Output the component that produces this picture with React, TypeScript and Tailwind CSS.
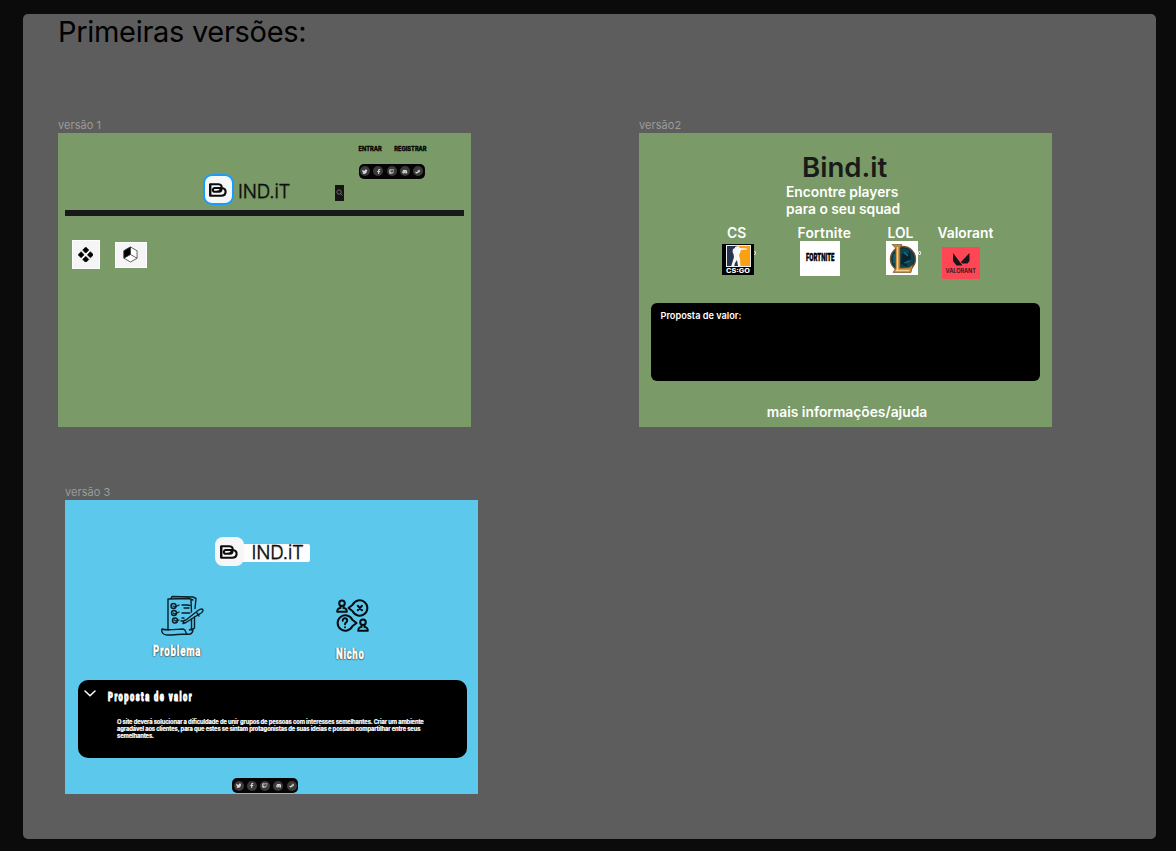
import React from "react";
import { FaDiscord, FaFacebookF, FaSteamSymbol, FaTwitch, FaTwitter } from "react-icons/fa";

function SocialPill() {
  const icons = [FaTwitter, FaFacebookF, FaTwitch, FaDiscord, FaSteamSymbol];
  return (
    <div className="flex h-[15.5px] w-[66px] items-center justify-between rounded-[5px] bg-[#050505] px-[1.5px]">
      {icons.map((Icon, i) => (
        <span key={i} className="flex size-[10px] items-center justify-center rounded-full bg-[#3b3b3b]">
          <Icon className="size-[5.5px] text-[#d8d8d8]" />
        </span>
      ))}
    </div>
  );
}

function Mark({ className }: { className: string }) {
  return (
    <svg viewBox="0 0 18 14" className={className} fill="none" stroke="#0b0b0b" strokeWidth="2.1" strokeLinejoin="round">
      <path d="M1.200 1.200H9.300C12.500 1.200 13.200 3.500 12.200 5.600C11.200 8.200 9.500 8.800 7.500 8.800H5.800C3.200 8.800 3.200 5 5.800 5H12.800C18 5 18 12.800 12 12.800H1.200ZM12.200 5.600C13 7.500 11.800 8.800 10 8.800H7.500" />
      <path d="M1.200 1.200V12.800" />
    </svg>
  );
}

function VersionOne() {
  return (
    <div className="h-[293.5px] w-[413px] bg-[#7a9b67]">
      <div className="flex h-[77px]">
        <div className="ml-[145px] mt-[41px] flex h-[31px] w-[132px] items-center">
          <div className="flex size-[31px] shrink-0 items-center justify-center rounded-[9px] border-2 border-[#1a9bff] bg-[#f7f7f7]">
            <Mark className="-ml-[2px] h-[14px] w-[18px]" />
          </div>
          <span className="ml-[4px] mt-[4px] whitespace-nowrap text-[18.7px] font-light leading-[22px] tracking-[-0.15px] text-[#0d0d0d] [-webkit-text-stroke:0.3px_#0d0d0d] [text-shadow:0_1px_1px_#0004]">IND.iT</span>
        </div>
        <div className="mt-[52px] flex h-[15.5px] w-[9px] items-center justify-center bg-[#151515]">
          <svg viewBox="0 0 8 8" className="size-[7px]" fill="none" stroke="#777" strokeWidth="1">
            <circle cx="3.5" cy="3.5" r="2.5" />
            <path d="m5.4 5.4 2 2" />
          </svg>
        </div>
        <div className="ml-[14px] mt-[12px]">
          <div className="flex h-[7px] items-center gap-[12.5px] whitespace-nowrap pl-[0.5px] text-[5.7px] font-bold leading-[7px] text-black [-webkit-text-stroke:0.3px_#000]">
            <span>ENTRAR</span>
            <span>REGISTRAR</span>
          </div>
          <div className="mt-[11.5px] pl-[0.5px]">
            <SocialPill />
          </div>
        </div>
      </div>
      <div className="ml-[7px] h-[6px] w-[398.5px] bg-[#191919]" />
      <div className="ml-[14px] mt-[24px] flex items-center gap-[15px]">
        <div className="flex h-[29px] w-[27.5px] items-center justify-center border border-white bg-[#f5f5f5]">
          <svg viewBox="0 0 16 16" className="-ml-px size-[15.5px]">
            <path d="m8 0 3.200 3.200L8 6.400 4.800 3.200ZM8 9.600l3.200 3.200L8 16l-3.200-3.200ZM3.200 4.800 6.400 8l-3.200 3.200L0 8ZM12.800 4.800 16 8l-3.200 3.200L9.600 8Z" fill="#000" stroke="#000" strokeWidth=".6" />
            <circle cx="8" cy="8" r="1.500" fill="#fff" />
          </svg>
        </div>
        <div className="flex h-[26px] w-[32px] items-center justify-center border border-white bg-[#f5f5f5]">
          <svg viewBox="0 0 16 18" className="-ml-px h-[17px] w-[15px]" stroke="#333" strokeWidth="0.8" strokeLinejoin="round" fill="none">
            <path d="M8 1 15 5v8l-7 4-7-4V5Z" fill="#fff" />
            <path d="M8 1v8l-7 4V5Z" fill="#000" />
            <path d="M8 9 15 13" />
          </svg>
        </div>
      </div>
    </div>
  );
}

function CsLogo() {
  return (
    <svg viewBox="0 0 32 31" className="h-[31px] w-[32px]">
      <path fill="#000" d="M0 0h32v31H0z" />
      <path fill="#e9edf0" d="M4 1h25v22H4z" />
      <path fill="#263451" d="M5 2h11v20H5z" />
      <path fill="#f9a013" d="M16 2h12v20H16z" />
      <path fill="#f7f7f7" d="m13 3 3-1 2 2 7 .5v1l-6 .5-1 3-1 2 1 4 .5 7H16l-1-6-2 3-1 4H9l1.500-5 1.500-5-.5-3-1-2 .5-3 2-1Z" />
      <text x="4" y="29.200" textLength="24" lengthAdjust="spacingAndGlyphs" fontFamily="Inter" fontSize="6" fontWeight="800" fill="#fff">CS:GO</text>
    </svg>
  );
}

function LolLogo() {
  return (
    <svg viewBox="0 0 32 34" className="h-[34px] w-[32px]">
      <path fill="#fff" d="M0 0h32v34H0z" />
      <circle cx="17" cy="18" r="12.500" fill="#0b3442" stroke="#76552c" strokeWidth="1.400" />
      <circle cx="17" cy="18" r="10.600" fill="#0b4351" />
      <path fill="#07232f" d="m16 12 5 3 3-5 1 8-6 3 3 5-7-3Z" />
      <path d="m18 11 4 4M18 22l6-2M8 13v9" stroke="#15707f" strokeWidth="1.200" />
      <path fill="#c18638" stroke="#68431b" strokeWidth=".6" d="M6 3.500h10l-2 3.500v20l9-.5 4-3-2 8H7l2.500-4V7Z" />
      <path d="M11.500 6v22l-1 1.500h13" stroke="#f0d08b" fill="none" strokeWidth="1.400" />
    </svg>
  );
}

function ValorantLogo() {
  return (
    <svg viewBox="0 0 38 32" className="h-[32px] w-[38px]">
      <path fill="#ff4655" d="M0 0h38v32H0z" />
      <path fill="#19151a" d="m11 6 9.500 12.500h-6L11 14ZM27.500 6v8l-2 2.500h-5.500L19 15Z" />
      <text x="3.500" y="26" textLength="30.500" lengthAdjust="spacingAndGlyphs" fontFamily="Inter" fontSize="5.500" fontWeight="600" fill="#19151a">VALORANT</text>
    </svg>
  );
}

function VersionTwo() {
  return (
    <div className="h-[293.5px] w-[413px] overflow-hidden bg-[#7a9b67] font-semibold text-white">
      <div className="ml-[163px] mt-[17px] whitespace-nowrap text-[27.6px] leading-[34px] text-[#1a1a1a]">Bind.it</div>
      <div className="ml-[147px] whitespace-nowrap text-[13.8px] leading-[17px]">
        Encontre players
        <br />
        para o seu squad
      </div>
      <div className="mt-[6px] flex h-[62px] whitespace-nowrap text-[13.8px] leading-[18px]">
        <div className="ml-[83px] w-[75px]">
          <div className="pl-[5px]">CS</div>
          <div className="mt-[2px] flex items-start">
            <CsLogo />
            <span className="mt-[7px] h-[4px] w-[2px] rounded-r-full border border-l-0 border-white/80" />
          </div>
        </div>
        <div className="w-[89px]">
          <div className="pl-[0.5px] tracking-[0.25px]">Fortnite</div>
          <div className="-mt-[1.5px] ml-[3px] flex h-[35.5px] w-[40px] items-center justify-center bg-white">
            <span className="w-[29px] whitespace-nowrap">
              <span className="block w-[50px] origin-left scale-x-[0.58] text-[10.5px] font-black leading-[14px] text-black [-webkit-text-stroke:0.4px_#000] [font-family:Roboto,sans-serif]">FORTNITE</span>
            </span>
          </div>
        </div>
        <div className="w-[51px]">
          <div className="pl-[1.5px]">LOL</div>
          <div className="-mt-[1px] flex items-start">
            <LolLogo />
            <span className="mt-[10px] h-[4px] w-[3px] rounded-[1px] border border-white/80" />
          </div>
        </div>
        <div>
          <div className="pl-[0.5px]">Valorant</div>
          <div className="ml-[5px] mt-[5px]">
            <ValorantLogo />
          </div>
        </div>
      </div>
      <div className="ml-[11.5px] mt-[16.6px] h-[78px] w-[389.5px] rounded-[6px] bg-black px-[10px] pt-[7px] text-[9.2px] leading-[12px]">Proposta de valor:</div>
      <div className="mt-[22.4px] whitespace-nowrap pl-[3px] text-center text-[13.8px] leading-[18px]">mais informações/ajuda</div>
    </div>
  );
}

function ChecklistIcon() {
  return (
    <svg viewBox="0 0 43 42" className="h-[42px] w-[43px]" fill="none" stroke="#0a1e27" strokeWidth="1.4" strokeLinecap="round" strokeLinejoin="round">
      <path d="M7 4 28 3.500l4 1.500M7 4v31M30 5l.5 12M10 3.500l1-2 21 .5 3 1.500-1 10M30.500 24v10l-2 1M33.500 22v11l-3 2" />
      <path d="M1 34c4 2 16 0 21 0 4 1 2 4 4 5 4 1 6-1 6-5M1 34c-1 3 1 6 5 6 7 0 14-1 20-1" />
      <path d="m25 25 12-9.500c3-2 5-2 5 0s-4 4-6 5l-11 7-3 1 1-3 2-.5m11-7 2 3" />
      <circle cx="12.500" cy="11" r="2.500" />
      <circle cx="13" cy="18" r="2.500" />
      <circle cx="14" cy="25.500" r="2.500" />
      <path d="m12 11 2 1 4-2M12 18l2 1 4-2M13 25l2 1 3-1M21 10h5l3 .5M23 13h5M21 18h8M20 26h2M21 23h2" strokeWidth="1.300" />
    </svg>
  );
}

function NicheIcon() {
  return (
    <svg viewBox="0 0 33 33" className="h-[33px] w-[33px]" fill="none" stroke="#040e12" strokeWidth="2" strokeLinecap="round" strokeLinejoin="round">
      <circle cx="6" cy="4.200" r="2.800" />
      <path d="M4.500 7.500v1.500C2 9.500 1.200 10 1.200 12.800h9.600c0-2.800-.8-3.300-3.300-3.800V7.500" />
      <path d="m12.500 9 4.200-3.300a7.700 7.700 0 1 1 0 6.600Z" />
      <path d="m21.800 6.800 4.200 4.400m0-4.400-4.200 4.400" />
      <path d="m20.500 24-4.200-3.300a7.700 7.700 0 1 0 0 6.600Z" />
      <path d="M6.700 21.700c0-3.500 5-3 4.500 0 0 1.800-2.200 1.500-2.200 3.500M9 28.200v.1" />
      <circle cx="27" cy="23.200" r="2.800" />
      <path d="M25.500 26.500V28c-2.500.5-3.300 1-3.300 3.800h9.600c0-2.800-.8-3.300-3.300-3.800v-1.500" />
    </svg>
  );
}

function VersionThree() {
  return (
    <div className="flex h-[294px] w-[413px] flex-col overflow-hidden bg-[#5bc8ec]">
      <div className="ml-[150px] mt-[37px] flex h-[28.5px] items-center">
        <div className="z-10 flex size-[28.5px] shrink-0 items-center justify-center rounded-[8px] bg-[#f6f6f6]">
          <Mark className="-ml-[1px] h-[14px] w-[18px]" />
        </div>
        <div className="-ml-[3px] mt-[2px] flex h-[18px] w-[69.5px] items-center rounded-[2px] bg-[#fdfdfd] pl-[11px]">
          <span className="whitespace-nowrap text-[18.7px] font-light leading-[18px] tracking-[-0.15px] text-[#0d0d0d] [-webkit-text-stroke:0.3px_#0d0d0d] [text-shadow:0_1px_1px_#0004]">IND.iT</span>
        </div>
      </div>
      <div className="mt-[29.5px] flex h-[85px]">
        <div className="ml-[88px] w-[183px]">
          <div className="ml-[8px]">
            <ChecklistIcon />
          </div>
          <div className="mt-[6px] h-[16px] w-[68px] origin-left scale-x-[0.7] whitespace-nowrap text-[14px] font-black leading-[16px] tracking-[1px] text-white [-webkit-text-stroke:0.4px_#fff] [font-family:Roboto,sans-serif] [text-shadow:0_1px_1px_#0009,1px_0_1px_#0008,-1px_0_1px_#0005]">Problema</div>
        </div>
        <div className="pt-[4px]">
          <NicheIcon />
          <div className="mt-[14px] h-[16px] w-[42px] origin-left scale-x-[0.69] whitespace-nowrap text-[14px] font-black leading-[16px] tracking-[0.9px] text-white [-webkit-text-stroke:0.4px_#fff] [font-family:Roboto,sans-serif] [text-shadow:0_1px_1px_#0009,1px_0_1px_#0008,-1px_0_1px_#0005]">Nicho</div>
        </div>
      </div>
      <div className="ml-[12.5px] flex h-[78px] w-[389px] rounded-[10px] bg-black text-white">
        <svg viewBox="0 0 12 7" className="ml-[6.5px] mt-[9.5px] h-[7px] w-[12px]" fill="none" stroke="#fff" strokeWidth="1.5" strokeLinecap="round">
          <path d="m1 1 5 4.800L11 1" />
        </svg>
        <div className="ml-[12px] mt-[9px]">
          <div className="h-[16px] w-[140px] origin-left scale-x-[0.625] whitespace-nowrap text-[12px] font-black leading-[16px] tracking-[2.4px] [-webkit-text-stroke:1px_#fff] [font-family:Roboto,sans-serif]">Proposta de valor</div>
          <p className="ml-[9px] mt-[13px] whitespace-nowrap text-[5.8px] font-bold leading-[7px] tracking-[-0.12px] [-webkit-text-stroke:0.2px_#fff]">
            O site deverá solucionar a dificuldade de unir grupos de pessoas com interesses semelhantes. Criar um ambiente
            <br />
            agradável aos clientes, para que estes se sintam protagonistas de suas ideias e possam compartilhar entre seus
            <br />
            semelhantes.
          </p>
        </div>
      </div>
      <div className="ml-[167px] mt-[19.5px]">
        <SocialPill />
      </div>
    </div>
  );
}

function Artboard({ label, className, children }: { label: string; className: string; children: React.ReactNode }) {
  return (
    <section className={className}>
      <div className="h-[15px] whitespace-nowrap text-[11px] leading-[14px] tracking-[0.05px] text-[#9b9b9b]">{label}</div>
      {children}
    </section>
  );
}

export default function App() {
  return (
    <main className="h-[851px] w-[1176px] overflow-hidden bg-[#0b0b0b] pl-[22.5px] pt-[14px] [font-family:Inter,sans-serif]">
      <div className="relative h-[825px] w-[1133px] overflow-hidden rounded-[5px] bg-[#5d5d5d]">
        <h1 className="ml-[35.5px] whitespace-nowrap text-[29px] font-[380] leading-[35px] tracking-[-0.3px] text-black">Primeiras versões:</h1>
        <Artboard label="versão 1" className="absolute left-[35.5px] top-[104px]">
          <VersionOne />
        </Artboard>
        <Artboard label="versão2" className="absolute left-[616.5px] top-[104px]">
          <VersionTwo />
        </Artboard>
        <Artboard label="versão 3" className="absolute left-[42.5px] top-[471.4px]">
          <VersionThree />
        </Artboard>
      </div>
    </main>
  );
}
